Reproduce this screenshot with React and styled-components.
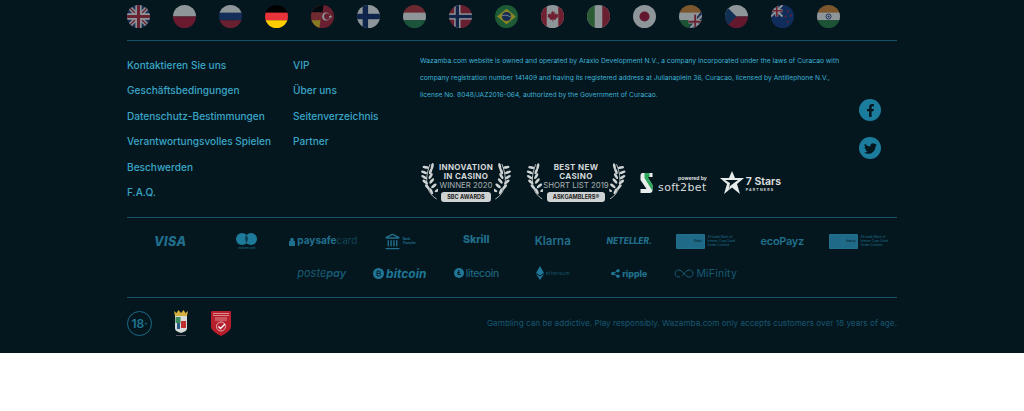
import React from "react";
import styled, { createGlobalStyle } from "styled-components";
import { FaFacebookF, FaTwitter } from "react-icons/fa";
import { Landmark } from "lucide-react";

const Global = createGlobalStyle`
  html, body { margin: 0; padding: 0; background: #fff; }
  body { font-family: Inter, "Noto Sans", sans-serif; }
`;

const Footer = styled.footer`
  height: 353px;
  background: #04171f;
  box-sizing: border-box;
  padding: 5px 127px 0;
  overflow: hidden;
`;
const FlagRow = styled.div`
  display: grid;
  grid-template-columns: repeat(16, 46px);
  height: 35px;
  border-bottom: 1px solid #14536b;
`;
const FlagIcon = styled.svg`
  width: 23px;
  height: 23px;
  border-radius: 50%;
  opacity: ${(p) => (p.$active ? 1 : 0.55)};
  filter: ${(p) => (p.$active ? "none" : "saturate(.8)")};
  display: block;
`;
const Main = styled.section`
  display: grid;
  grid-template-columns: 166px 127px 439px 22px;
  height: 177px;
  padding-top: 12px;
  box-sizing: border-box;
  border-bottom: 1px solid #14536b;
`;
const LinkList = styled.ul`
  list-style: none;
  margin: 0;
  padding: 0;
`;
const LinkItem = styled.li`
  font-size: 10.1px;
  font-weight: 500;
  line-height: 25.4px;
  color: #3aa6c6;
  white-space: nowrap;
`;
const Middle = styled.div`
  display: flex;
  flex-direction: column;
`;
const Legal = styled.p`
  margin: 0;
  font-size: 6.7px;
  line-height: 17px;
  color: #3fb2d4;
  white-space: pre-line;
  height: 51px;
`;
const Partners = styled.div`
  display: flex;
  align-items: center;
  margin-top: 58px;
  height: 41px;
`;
const Award = styled.div`
  display: flex;
  align-items: flex-start;
  width: ${(p) => p.$w}px;
  margin-right: ${(p) => p.$mr}px;
  justify-content: space-between;
`;
const AwardText = styled.div`
  display: flex;
  flex-direction: column;
  align-items: center;
  color: #d5d8d8;
  text-align: center;
`;
const AwardBold = styled.span`
  font-size: 8px;
  font-weight: 700;
  line-height: 9px;
  letter-spacing: 0.35px;
  white-space: nowrap;
`;
const AwardLight = styled.span`
  font-size: 7.8px;
  font-weight: 400;
  line-height: 9px;
  color: #aab0b2;
  white-space: nowrap;
`;
const AwardTag = styled.span`
  margin-top: 2px;
  background: #cfd2d2;
  color: #222;
  font-size: 5.6px;
  font-weight: 700;
  line-height: 10px;
  padding: 0 ${(p) => p.$px}px;
  border-radius: 3px;
  white-space: nowrap;
`;
const Soft = styled.div`
  display: flex;
  align-items: center;
  gap: 4px;
  margin-right: 13px;
`;
const SoftText = styled.div`
  display: flex;
  flex-direction: column;
  align-items: flex-end;
  color: #d9dcdc;
  margin-top: 3px;
`;
const Powered = styled.span`
  font-size: 5px;
  font-weight: 700;
  line-height: 8px;
`;
const SoftName = styled.span`
  font-family: "DejaVu Sans", sans-serif;
  font-size: 11px;
  line-height: 12px;
  letter-spacing: 0.4px;
`;
const Stars = styled.div`
  display: flex;
  align-items: center;
  gap: 2px;
  color: #e0e3e3;
`;
const StarsText = styled.div`
  display: flex;
  flex-direction: column;
  margin-top: 3px;
`;
const StarsName = styled.span`
  font-size: 10.5px;
  font-weight: 600;
  line-height: 11px;
  white-space: nowrap;
`;
const StarsSub = styled.span`
  font-size: 3.6px;
  line-height: 6px;
  letter-spacing: 1.2px;
  font-weight: 600;
`;
const Social = styled.div`
  display: flex;
  flex-direction: column;
  gap: 16px;
  margin-top: 46px;
`;
const SocialBtn = styled.div`
  width: 22px;
  height: 22px;
  border-radius: 50%;
  background: #1c7c9d;
  color: #04171f;
  display: flex;
  align-items: center;
  justify-content: center;
  font-size: 13px;
`;
const Payments = styled.section`
  display: grid;
  grid-template-columns: repeat(10, 76.5px);
  grid-auto-rows: 32px;
  height: 80px;
  padding: 7px 0 0 5px;
  box-sizing: border-box;
  border-bottom: 1px solid #14536b;
`;
const Pay = styled.div`
  grid-column: ${(p) => p.$col || "auto"};
  display: flex;
  align-items: center;
  justify-content: center;
  gap: 2px;
  white-space: nowrap;
  color: ${(p) => p.$color || "#206f8c"};
`;
const PayWord = styled.span`
  font-family: ${(p) => p.$font || "Inter, sans-serif"};
  font-size: ${(p) => p.$size}px;
  font-weight: ${(p) => p.$weight || 700};
  font-style: ${(p) => (p.$italic ? "italic" : "normal")};
  letter-spacing: ${(p) => p.$ls || 0}px;
  color: ${(p) => p.$color || "inherit"};
  margin-bottom: ${(p) => p.$up || 0}px;
`;
const PayStack = styled.div`
  display: flex;
  flex-direction: column;
  align-items: center;
  gap: 1px;
`;
const TinyLines = styled.span`
  font-size: 3.2px;
  line-height: 4px;
  white-space: pre-line;
  color: #206f8c;
`;
const NoteBox = styled.div`
  width: ${(p) => p.$w}px;
  height: 15px;
  background: #206f8c;
  display: grid;
  grid-template-columns: 1fr 1fr;
  gap: 1px;
  padding: 1px;
  box-sizing: border-box;
  border-radius: 1px;
`;
const NoteCell = styled.span`
  background: #1f6a86;
  color: #04171f;
  font-size: 3px;
  line-height: 13px;
  text-align: center;
`;
const Bottom = styled.section`
  display: flex;
  align-items: center;
  height: 50px;
`;
const AgeBadge = styled.div`
  width: 23px;
  height: 23px;
  border: 1px solid #1c6a85;
  border-radius: 50%;
  color: #1f7695;
  font-size: 12px;
  font-weight: 600;
  display: flex;
  align-items: center;
  justify-content: center;
  margin-right: 21px;
  flex: none;
`;
const Plus = styled.span`
  font-size: 5px;
`;
const Seal = styled.svg`
  display: block;
  margin-right: ${(p) => p.$mr}px;
  flex: none;
`;
const Note = styled.p`
  margin: 0 0 0 auto;
  font-size: 8.2px;
  color: #175670;
  white-space: nowrap;
`;

const Cross = ({ bg, fg, inner, w = 3, iw = 1.5, cx = 8 }) => (
  <>
    <rect width="22" height="22" fill={bg} />
    <rect x={cx - w} width={w * 2} height="22" fill={fg} />
    <rect y={11 - w} width="22" height={w * 2} fill={fg} />
    {inner && <rect x={cx - iw} width={iw * 2} height="22" fill={inner} />}
    {inner && <rect y={11 - iw} width="22" height={iw * 2} fill={inner} />}
  </>
);
const Union = () => (
  <>
    <rect width="22" height="22" fill="#27408f" />
    <path d="M0 0L22 22M22 0L0 22" stroke="#fff" strokeWidth="4" />
    <path d="M0 0L22 22M22 0L0 22" stroke="#d8263c" strokeWidth="1.4" />
    <path d="M11 0V22M0 11H22" stroke="#fff" strokeWidth="6" />
    <path d="M11 0V22M0 11H22" stroke="#d8263c" strokeWidth="3" />
  </>
);
const Tri = ({ a, b, c }) => (
  <>
    <rect width="22" height="8" fill={a} />
    <rect y="7.3" width="22" height="7.4" fill={b} />
    <rect y="14.6" width="22" height="7.4" fill={c} />
  </>
);
const flags = [
  <Union />,
  <>
    <rect width="22" height="11" fill="#fff" />
    <rect y="11" width="22" height="11" fill="#dc143c" />
  </>,
  <Tri a="#fff" b="#1c3f9c" c="#d8203c" />,
  <Tri a="#000" b="#e8333a" c="#ffcc00" />,
  <>
    <rect width="22" height="22" fill="#d8203c" />
    <path d="M0 0H12L8 22H0Z" fill="#e8333a" />
    <path d="M0 0H12L11 7H0Z" fill="#000" />
    <path d="M0 14.6H9L8 22H0Z" fill="#ffcc00" />
    <circle cx="14.5" cy="11" r="3.8" fill="#fff" />
    <circle cx="15.5" cy="11" r="3" fill="#d8203c" />
    <path d="M18.5 9.2l.5 1.3 1.3.1-1 .9.3 1.3-1.1-.7-1.1.7.3-1.3-1-.9 1.3-.1z" fill="#fff" />
  </>,
  <Cross bg="#fff" fg="#12307f" w={2.6} />,
  <Tri a="#e0303a" b="#fff" c="#1f8a4c" />,
  <Cross bg="#d8203c" fg="#fff" inner="#1c2e78" w={3} iw={1.6} />,
  <>
    <rect width="22" height="22" fill="#1e9a3c" />
    <path d="M11 3.5L20 11L11 18.5L2 11Z" fill="#ffdf00" />
    <circle cx="11" cy="11" r="4.4" fill="#1c3f8f" />
    <path d="M6.8 10c3-.6 6-.1 8.3 1.6" stroke="#fff" strokeWidth=".8" fill="none" />
  </>,
  <>
    <rect width="22" height="22" fill="#fff" />
    <rect width="5.5" height="22" fill="#e8203c" />
    <rect x="16.5" width="5.5" height="22" fill="#e8203c" />
    <path d="M11 5l1 2 1.2-.6-.4 2.8 1.7-1.2.5 1 1.6-.3-.6 2 .7.5-2.7 2 .3 1.1-2.6-.4V16h-.6v-2.1l-2.6.4.3-1.1-2.7-2 .7-.5-.6-2 1.6.3.5-1 1.7 1.2-.4-2.8 1.2.6z" fill="#e8203c" />
  </>,
  <>
    <rect width="22" height="22" fill="#fff" />
    <rect width="7.4" height="22" fill="#3f9a3c" />
    <rect x="14.6" width="7.4" height="22" fill="#d8203c" />
  </>,
  <>
    <rect width="22" height="22" fill="#fff" />
    <circle cx="11" cy="11" r="4.8" fill="#d01040" />
  </>,
  <>
    <Tri a="#f08a24" b="#fff" c="#1f8a3c" />
    <path d="M9 22L22 5V22Z" fill="#27408f" />
    <path d="M10 12L22 22M22 10L11 22" stroke="#fff" strokeWidth="2" />
    <path d="M15.5 9V22M9 16H22" stroke="#fff" strokeWidth="3.4" />
    <path d="M15.5 9V22M9 16H22" stroke="#d8263c" strokeWidth="1.8" />
  </>,
  <>
    <rect width="22" height="11" fill="#fff" />
    <rect y="11" width="22" height="11" fill="#d0103c" />
    <path d="M0 0L11 11L0 22Z" fill="#11458f" />
  </>,
  <>
    <rect width="22" height="22" fill="#0f3f9f" />
    <path d="M0 0H11V11H0Z" fill="#1a3a90" />
    <path d="M0 0L11 11M11 0L0 11" stroke="#fff" strokeWidth="1.8" />
    <path d="M5.5 0V11M0 5.5H11" stroke="#fff" strokeWidth="3" />
    <path d="M5.5 0V11M0 5.5H11" stroke="#e8203c" strokeWidth="1.6" />
    <circle cx="16" cy="6" r=".9" fill="#e8203c" />
    <circle cx="19" cy="10" r=".9" fill="#e8203c" />
    <circle cx="14" cy="11" r=".9" fill="#e8203c" />
    <circle cx="16" cy="16" r=".9" fill="#e8203c" />
  </>,
  <>
    <Tri a="#f08a24" b="#fff" c="#1f8a3c" />
    <circle cx="11" cy="11" r="2.4" fill="none" stroke="#1c3f9c" strokeWidth=".9" />
    <circle cx="11" cy="11" r=".9" fill="#1c3f9c" />
  </>,
];

const Laurel = ({ flip }) => {
  const leaves = [
    [13, 27, 30], [9.5, 23, 15], [7.5, 18.5, 5], [6.5, 14, -5], [6.5, 9.5, -15], [8, 5, -25],
  ];
  return (
    <svg width="18" height="37" viewBox="0 0 16 34" style={flip ? { transform: "scaleX(-1)" } : undefined} aria-hidden="true">
      <path d="M15 33C6 28 3 16 9 1" fill="none" stroke="#cfd3d3" strokeWidth=".8" />
      {leaves.map(([x, y, r], i) => (
        <g key={i} fill="#cfd3d3">
          <ellipse cx={x - 3} cy={y - 1} rx="3" ry="1.25" transform={`rotate(${r + 35} ${x - 3} ${y - 1})`} />
          <ellipse cx={x + 3} cy={y - 2} rx="3" ry="1.25" transform={`rotate(${r - 55} ${x + 3} ${y - 2})`} />
        </g>
      ))}
    </svg>
  );
};

const SealCrown = () => (
  <Seal $mr={22} width="16" height="27" viewBox="0 0 16 27" aria-hidden="true">
    <path d="M1 1l2.5 2L5.5 0 8 3l2.5-3 2 3L15 1l-1 5H2z" fill="#d4b040" />
    <path d="M2 6h12v12c0 3-3 4-6 5-3-1-6-2-6-5z" fill="#d8dcd8" />
    <rect x="2.5" y="7" width="5" height="6" fill="#3a8a5c" />
    <rect x="8" y="11" width="5" height="7" fill="#c03030" />
    <rect x="4" y="13" width="3" height="6" fill="#2a5a8c" />
    <rect x="3" y="25" width="10" height="1" fill="#556" />
  </Seal>
);
const SealShield = () => (
  <Seal $mr={0} width="20" height="25" viewBox="0 0 20 25" aria-hidden="true">
    <path d="M0 1Q0 0 1 0H19Q20 0 20 1V16Q20 20 10 25Q0 20 0 16Z" fill="#b81f2c" />
    <path d="M2 2.5H18M2 4.5H18M4 9H16M4 7H16" stroke="#e8b8bc" strokeWidth=".7" />
    <circle cx="10" cy="15.5" r="4.5" fill="none" stroke="#eecdd0" strokeWidth=".8" />
    <path d="M7.5 15.5l2 2 4.5-4.5" fill="none" stroke="#fff" strokeWidth="1.4" />
  </Seal>
);

export default function App() {
  return (
    <Footer>
      <Global />
      <FlagRow>
        {flags.map((f, i) => (
          <FlagIcon key={i} viewBox="0 0 22 22" $active={i === 3} aria-hidden="true">
            {React.cloneElement(f, { key: i })}
          </FlagIcon>
        ))}
      </FlagRow>
      <Main>
        <LinkList>
          {["Kontaktieren Sie uns", "Geschäftsbedingungen", "Datenschutz-Bestimmungen", "Verantwortungsvolles Spielen", "Beschwerden", "F.A.Q."].map((t) => (
            <LinkItem key={t}>{t}</LinkItem>
          ))}
        </LinkList>
        <LinkList>
          {["VIP", "Über uns", "Seitenverzeichnis", "Partner"].map((t) => (
            <LinkItem key={t}>{t}</LinkItem>
          ))}
        </LinkList>
        <Middle>
          <Legal>{`Wazamba.com website is owned and operated by Araxio Development N.V., a company incorporated under the laws of Curacao with
company registration number 141409 and having its registered address at Julianaplein 36, Curacao, licensed by Antillephone N.V.,
license No. 8048/JAZ2016-064, authorized by the Government of Curacao.`}</Legal>
          <Partners>
            <Award $w={92} $mr={14}>
              <Laurel />
              <AwardText>
                <AwardBold>INNOVATION</AwardBold>
                <AwardBold>IN CASINO</AwardBold>
                <AwardLight>WINNER 2020</AwardLight>
                <AwardTag $px={6}>SBC AWARDS</AwardTag>
              </AwardText>
              <Laurel flip />
            </Award>
            <Award $w={100} $mr={13}>
              <Laurel />
              <AwardText>
                <AwardBold>BEST NEW</AwardBold>
                <AwardBold>CASINO</AwardBold>
                <AwardLight>SHORT LIST 2019</AwardLight>
                <AwardTag $px={6}>ASKGAMBLERS®</AwardTag>
              </AwardText>
              <Laurel flip />
            </Award>
            <Soft>
              <svg width="15" height="20" viewBox="0 0 14 20" aria-hidden="true">
                <path d="M3 0H13V4H8L13 12V17Q13 20 10 20H1V16H7L1 7V3Q1 0 3 0Z" fill="#e8ecec" />
                <path d="M5 0H10V4H8L13 12V18L5 5Z" fill="#2aa85c" />
              </svg>
              <SoftText>
                <Powered>powered by</Powered>
                <SoftName>soft2bet</SoftName>
              </SoftText>
            </Soft>
            <Stars>
              <svg width="24" height="23" viewBox="0 0 24 23" aria-hidden="true">
                <path d="M12 0L15 7H24L17 13L20 23L12 16.5L4 23L7 13L0 7H9Z" fill="#e8ecec" />
                <path d="M5 9H18L10 15L8.5 19.5L10 12Z" fill="#04171f" />
              </svg>
              <StarsText>
                <StarsName>7 Stars</StarsName>
                <StarsSub>PARTNERS</StarsSub>
              </StarsText>
            </Stars>
          </Partners>
        </Middle>
        <Social>
          <SocialBtn><FaFacebookF /></SocialBtn>
          <SocialBtn><FaTwitter /></SocialBtn>
        </Social>
      </Main>
      <Payments>
        <Pay><PayWord $size={12.5} $weight={800} $italic $ls={0.4}>VISA</PayWord></Pay>
        <Pay>
          <PayStack>
            <svg width="21" height="12" viewBox="0 0 21 12" aria-hidden="true">
              <circle cx="6" cy="6" r="6" fill="#1d7a9a" />
              <circle cx="15" cy="6" r="6" fill="#1d7a9a" />
              <path d="M10.5 2a6 6 0 0 1 0 8a6 6 0 0 1 0-8" fill="#0f4458" />
            </svg>
            <TinyLines>mastercard</TinyLines>
          </PayStack>
        </Pay>
        <Pay>
          <svg width="6" height="9" viewBox="0 0 6 9" aria-hidden="true">
            <path d="M1.2 4V2.5a1.8 1.8 0 0 1 3.6 0V4H6V9H0V4Z" fill="#206f8c" />
          </svg>
          <PayWord $size={10} $weight={700} $up={2}>paysafe</PayWord>
          <PayWord $size={10} $weight={300} $color="#155067" $up={2} style={{ marginLeft: -2 }}>card</PayWord>
        </Pay>
        <Pay>
          <Landmark size={17} strokeWidth={2} />
          <TinyLines style={{ fontWeight: 700 }}>{`Bank
Transfer`}</TinyLines>
        </Pay>
        <Pay><PayWord $size={10.5} $weight={800} $up={3}>Skrill</PayWord></Pay>
        <Pay><PayWord $size={11.5} $weight={600}>Klarna</PayWord></Pay>
        <Pay><PayWord $size={8.4} $weight={800} $italic>NETELLER.</PayWord></Pay>
        <Pay>
          <NoteBox $w={29}><NoteCell /><NoteCell>iDebit</NoteCell></NoteBox>
          <TinyLines>{`All trade Mark of
Interac Corp Used
Under License`}</TinyLines>
        </Pay>
        <Pay><PayWord $size={11} $weight={600} $ls={-0.3}>ecoPayz</PayWord></Pay>
        <Pay>
          <NoteBox $w={29}><NoteCell /><NoteCell>Interac</NoteCell></NoteBox>
          <TinyLines>{`All trade Mark of
Interac Corp Used
Under License`}</TinyLines>
        </Pay>
        <Pay $col="3"><PayWord $size={11} $weight={400} $italic $color="#185a73" style={{ marginRight: 3 }}>poste<PayWord $size={11} $weight={600} $italic>pay</PayWord></PayWord></Pay>
        <Pay>
          <svg width="11" height="11" viewBox="0 0 11 11" aria-hidden="true">
            <circle cx="5.5" cy="5.5" r="5.5" fill="#1f7696" />
            <path d="M4 3V8M4 3H6.2Q7.4 3 7.4 4.2Q7.4 5.4 6.2 5.4H4M6.2 5.4Q7.7 5.4 7.7 6.7Q7.7 8 6.2 8H4" stroke="#04171f" strokeWidth=".9" fill="none" />
          </svg>
          <PayWord $size={12} $weight={700} $italic $color="#1f7696">bitcoin</PayWord>
        </Pay>
        <Pay>
          <svg width="10" height="10" viewBox="0 0 10 10" aria-hidden="true">
            <circle cx="5" cy="5" r="5" fill="#1f7696" />
            <path d="M5 2L4 6.5H7M3 5.2L6 4.2" stroke="#04171f" strokeWidth="1" fill="none" />
          </svg>
          <PayWord $size={10.5} $weight={400} $ls={-0.3}>litecoin</PayWord>
        </Pay>
        <Pay>
          <svg width="8" height="14" viewBox="0 0 8 14" aria-hidden="true">
            <path d="M4 0L8 7L4 9.5L0 7Z M0 8L4 10.5L8 8L4 14Z" fill="#1f7696" />
          </svg>
          <PayWord $size={5} $weight={400} $color="#155067" $ls={0.2}>ethereum</PayWord>
        </Pay>
        <Pay>
          <svg width="9" height="9" viewBox="0 0 9 9" aria-hidden="true">
            <circle cx="7" cy="1.8" r="1.7" fill="#1f7696" />
            <circle cx="7" cy="7.2" r="1.7" fill="#1f7696" />
            <circle cx="1.8" cy="4.5" r="1.7" fill="#1f7696" />
            <path d="M7 1.8L1.8 4.5L7 7.2" stroke="#1f7696" fill="none" />
          </svg>
          <PayWord $size={8.8} $weight={800}>ripple</PayWord>
        </Pay>
        <Pay $color="#185a73">
          <svg width="20" height="9" viewBox="0 0 20 9" aria-hidden="true">
            <path d="M6 7.8C3.5 8.6 1 7 1 4.5S3.5.4 6 1.2C9 2.2 11 6.8 14 7.8S19 7 19 4.5 16.5.4 14 1.2C11.5 2 10 5 8.5 6.5" fill="none" stroke="#1a5b74" />
          </svg>
          <PayWord $size={10.5} $weight={400} $ls={0.2}>MiFinity</PayWord>
        </Pay>
      </Payments>
      <Bottom>
        <AgeBadge>18<Plus>+</Plus></AgeBadge>
        <SealCrown />
        <SealShield />
        <Note>Gambling can be addictive. Play responsibly. Wazamba.com only accepts customers over 18 years of age.</Note>
      </Bottom>
    </Footer>
  );
}
